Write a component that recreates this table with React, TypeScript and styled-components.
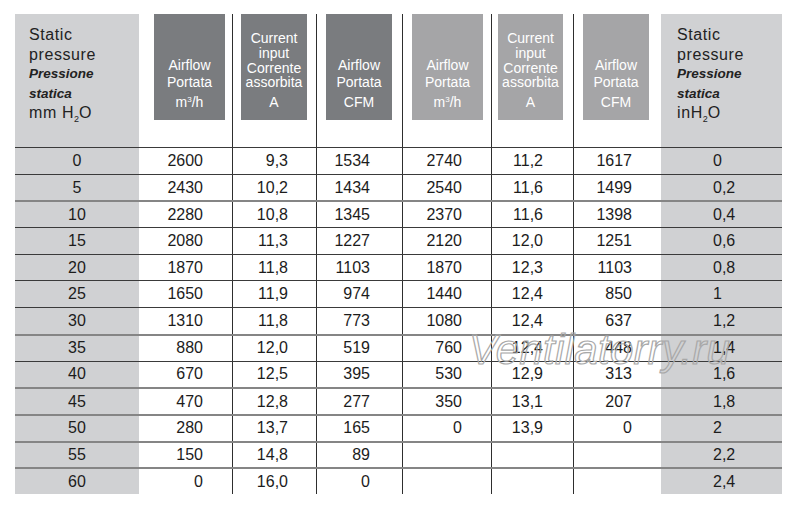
import React from "react";
import styled, { createGlobalStyle, css } from "styled-components";

const Global = createGlobalStyle`
  html, body { margin: 0; padding: 0; background: #ffffff; }
  body { font-family: "Liberation Sans", Arial, sans-serif; color: #1c1c1c; }
`;

const COLS = "124px 93px 84px 86px 89px 82px 88px 121px";

const Page = styled.div`
  width: 800px;
  height: 515px;
  padding: 14px 0 0 15px;
  box-sizing: border-box;
  position: relative;
  overflow: hidden;
`;

const Table = styled.div`
  display: flex;
  flex-direction: column;
  width: 767px;
`;

const HeaderRow = styled.div`
  display: grid;
  grid-template-columns: ${COLS};
  height: 133px;
`;

const Row = styled.div<{ $tone: "dark" | "grey" }>`
  display: grid;
  grid-template-columns: ${COLS};
  height: 26.7px;
  box-sizing: border-box;
  ${(p) =>
    p.$tone === "dark"
      ? css`border-top: 1px solid #3a3a3a;`
      : css`border-top: 2px solid #858585;`}
`;

const PressureHead = styled.div<{ $padLeft: number }>`
  background: #d0d1d3;
  padding: 11px 0 0 ${(p) => p.$padLeft}px;
  box-sizing: border-box;
  font-size: 16px;
  line-height: 19.6px;
  letter-spacing: 0.6px;
  color: #222;
`;

const Line = styled.div``;

const ItalicLine = styled.div`
  font-weight: bold;
  font-style: italic;
  font-size: 13.5px;
  letter-spacing: 0;
`;

const Sub = styled.span`
  font-size: 9px;
  position: relative;
  top: 4px;
  letter-spacing: 0;
`;

const BoxCell = styled.div<{ $divider: boolean; $padL: number }>`
  box-sizing: border-box;
  padding-left: ${(p) => p.$padL}px;
  ${(p) => p.$divider && css`border-left: 1px solid #2e2e2e;`}
`;

const Box = styled.div<{ $tone: "dark" | "light"; $w: number }>`
  width: ${(p) => p.$w}px;
  height: 106px;
  background: ${(p) => (p.$tone === "dark" ? "#7a7c7f" : "#a5a5a7")};
  color: #ffffff;
  display: flex;
  flex-direction: column;
  justify-content: flex-end;
  align-items: center;
  padding-bottom: 9px;
  box-sizing: border-box;
  font-size: 14px;
  text-align: center;
`;

const Labels = styled.div<{ $lh: number; $gap: number }>`
  line-height: ${(p) => p.$lh}px;
  margin-bottom: ${(p) => p.$gap}px;
`;

const Unit = styled.div`
  line-height: 17px;
`;

const Sup = styled.sup`
  font-size: 8px;
  vertical-align: 5px;
  line-height: 0;
`;

const Cell = styled.div<{
  $align: "left" | "center" | "right";
  $pad?: number;
  $grey?: boolean;
  $divider?: boolean;
}>`
  box-sizing: border-box;
  display: flex;
  align-items: center;
  font-size: 16px;
  color: #1c1c1c;
  justify-content: ${(p) =>
    p.$align === "left" ? "flex-start" : p.$align === "right" ? "flex-end" : "center"};
  ${(p) => p.$align === "right" && css`padding-right: ${p.$pad}px;`}
  ${(p) => p.$align === "left" && css`padding-left: ${p.$pad}px;`}
  ${(p) => p.$grey && css`background: #d0d1d3;`}
  ${(p) => p.$divider && css`border-left: 1px solid #2e2e2e;`}
`;

const Watermark = styled.div`
  position: absolute;
  left: 469px;
  top: 326px;
  font-family: "Liberation Sans", Arial, sans-serif;
  font-style: italic;
  font-size: 42px;
  color: transparent;
  -webkit-text-stroke: 1.2px #a8a8a8;
  letter-spacing: 0.3px;
  pointer-events: none;
  white-space: nowrap;
`;

type Head = {
  tone: "dark" | "light";
  labels: string[];
  unit: React.ReactNode;
  lh: number;
  gap: number;
  padL: number;
  w: number;
  divider: boolean;
};

const heads: Head[] = [
  { tone: "dark", labels: ["Airflow", "Portata"], unit: <>m<Sup>3</Sup>/h</>, lh: 17, gap: 3, padL: 15, w: 71, divider: false },
  { tone: "dark", labels: ["Current", "input", "Corrente", "assorbita"], unit: "A", lh: 14.6, gap: 4.2, padL: 8, w: 66, divider: true },
  { tone: "dark", labels: ["Airflow", "Portata"], unit: "CFM", lh: 17, gap: 3, padL: 9, w: 66, divider: true },
  { tone: "light", labels: ["Airflow", "Portata"], unit: <>m<Sup>3</Sup>/h</>, lh: 17, gap: 3, padL: 9, w: 71, divider: true },
  { tone: "light", labels: ["Current", "input", "Corrente", "assorbita"], unit: "A", lh: 14.6, gap: 4.2, padL: 6, w: 65, divider: true },
  { tone: "light", labels: ["Airflow", "Portata"], unit: "CFM", lh: 17, gap: 3, padL: 9, w: 66, divider: true },
];

const rightPads = [29, 28, 32, 29, 30, 29];

const rows: { mm: string; vals: string[]; inch: string; tone: "dark" | "grey" }[] = [
  { mm: "0", vals: ["2600", "9,3", "1534", "2740", "11,2", "1617"], inch: "0", tone: "dark" },
  { mm: "5", vals: ["2430", "10,2", "1434", "2540", "11,6", "1499"], inch: "0,2", tone: "dark" },
  { mm: "10", vals: ["2280", "10,8", "1345", "2370", "11,6", "1398"], inch: "0,4", tone: "grey" },
  { mm: "15", vals: ["2080", "11,3", "1227", "2120", "12,0", "1251"], inch: "0,6", tone: "dark" },
  { mm: "20", vals: ["1870", "11,8", "1103", "1870", "12,3", "1103"], inch: "0,8", tone: "dark" },
  { mm: "25", vals: ["1650", "11,9", "974", "1440", "12,4", "850"], inch: "1", tone: "dark" },
  { mm: "30", vals: ["1310", "11,8", "773", "1080", "12,4", "637"], inch: "1,2", tone: "dark" },
  { mm: "35", vals: ["880", "12,0", "519", "760", "12,4", "448"], inch: "1,4", tone: "grey" },
  { mm: "40", vals: ["670", "12,5", "395", "530", "12,9", "313"], inch: "1,6", tone: "dark" },
  { mm: "45", vals: ["470", "12,8", "277", "350", "13,1", "207"], inch: "1,8", tone: "grey" },
  { mm: "50", vals: ["280", "13,7", "165", "0", "13,9", "0"], inch: "2", tone: "grey" },
  { mm: "55", vals: ["150", "14,8", "89", "", "", ""], inch: "2,2", tone: "grey" },
  { mm: "60", vals: ["0", "16,0", "0", "", "", ""], inch: "2,4", tone: "grey" },
];

export default function App() {
  return (
    <>
      <Global />
      <Page>
        <Table>
          <HeaderRow>
            <PressureHead $padLeft={14}>
              <Line>Static</Line>
              <Line>pressure</Line>
              <ItalicLine>Pressione</ItalicLine>
              <ItalicLine>statica</ItalicLine>
              <Line>
                mm H<Sub>2</Sub>O
              </Line>
            </PressureHead>
            {heads.map((h, i) => (
              <BoxCell key={i} $divider={h.divider} $padL={h.padL}>
                <Box $tone={h.tone} $w={h.w}>
                  <Labels $lh={h.lh} $gap={h.gap}>
                    {h.labels.map((l) => (
                      <div key={l}>{l}</div>
                    ))}
                  </Labels>
                  <Unit>{h.unit}</Unit>
                </Box>
              </BoxCell>
            ))}
            <PressureHead $padLeft={16}>
              <Line>Static</Line>
              <Line>pressure</Line>
              <ItalicLine>Pressione</ItalicLine>
              <ItalicLine>statica</ItalicLine>
              <Line>
                inH<Sub>2</Sub>O
              </Line>
            </PressureHead>
          </HeaderRow>
          {rows.map((r) => (
            <Row key={r.mm} $tone={r.tone}>
              <Cell $align="center" $grey>
                {r.mm}
              </Cell>
              {r.vals.map((v, j) => (
                <Cell key={j} $align="right" $pad={rightPads[j]} $divider={j > 0}>
                  {v}
                </Cell>
              ))}
              <Cell $align="left" $pad={52} $grey>
                {r.inch}
              </Cell>
            </Row>
          ))}
        </Table>
        <Watermark>Ventilatorry.ru</Watermark>
      </Page>
    </>
  );
}
